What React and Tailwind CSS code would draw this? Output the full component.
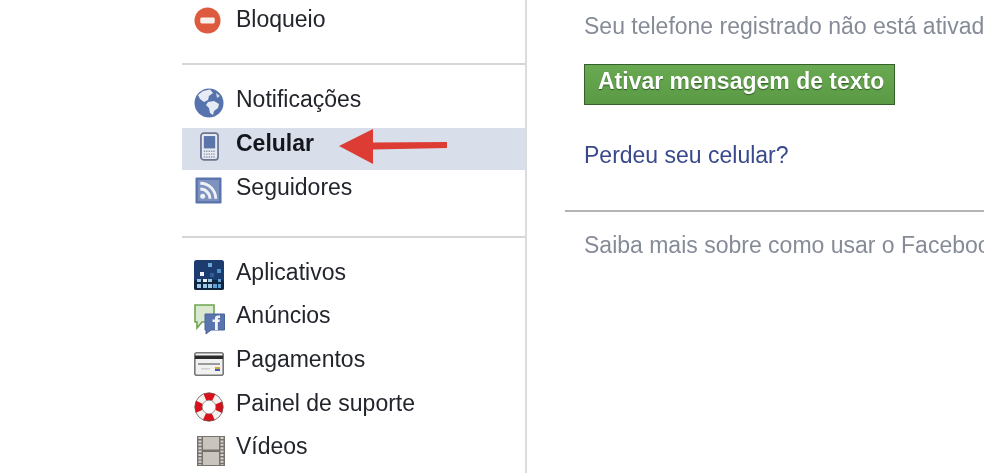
import React from "react";

const Block = () => (
  <svg viewBox="0 0 28 28" className="h-[27px] w-[27px]">
    <circle cx="14" cy="14" r="13.5" fill="#dd5a3f" />
    <rect x="6.5" y="11" width="15" height="6" rx="1.5" fill="#f7efe9" />
  </svg>
);

const Globe = () => (
  <svg viewBox="0 0 30 30" className="h-[30px] w-[30px]">
    <circle cx="15" cy="15" r="14.5" fill="#5673ad" />
    <path d="M9 3 L16 1.5 L19 5 L15 8 L14 12 L10 14 L6 11 L4 7 Z" fill="#e6ebf4" />
    <path d="M14 14 L20 13 L25 16 L24 20 L20 23 L19 27 L16 25 L15 20 L12 17 Z" fill="#e6ebf4" />
    <path d="M22 5 L26 8 L23 10 Z" fill="#d5dcea" />
  </svg>
);

const Phone = () => (
  <svg viewBox="0 0 20 30" className="h-[29px] w-[19px]">
    <rect x="1" y="1" width="18" height="28" rx="3" fill="#e8ebf3" stroke="#6a7590" strokeWidth="1.8" />
    <rect x="4" y="4" width="12" height="13" fill="#5b75ab" />
    <path d="M4 20h12M4 23h12M4 26h12" stroke="#8d97ad" strokeWidth="1.5" strokeDasharray="1.5 1" />
  </svg>
);

const Rss = () => (
  <svg viewBox="0 0 28 28" className="h-[27px] w-[27px]">
    <rect x="0.5" y="0.5" width="27" height="27" rx="1" fill="#5a74ad" />
    <rect x="3" y="3" width="22" height="22" fill="#7d92bf" />
    <circle cx="8" cy="20" r="2.6" fill="#eef1f7" />
    <path d="M5.5 12.5a10 10 0 0 1 10 10M5.5 6.5a16 16 0 0 1 16 16" fill="none" stroke="#eef1f7" strokeWidth="3" />
  </svg>
);

const Apps = () => (
  <svg viewBox="0 0 30 30" className="h-[30px] w-[30px]">
    <rect width="30" height="30" rx="2.5" fill="#1c3b6e" />
    <rect x="0" y="20" width="30" height="10" rx="2" fill="#10233f" />
    <rect x="14" y="3" width="4" height="4" fill="#6fa7d8" />
    <rect x="23" y="9" width="4" height="4" fill="#4f93cc" />
    <rect x="6" y="12" width="4" height="4" fill="#eef3f9" />
    <rect x="16" y="13" width="4" height="4" fill="#2d5f9b" />
    <g fill="#9cc8e6">
      <rect x="3" y="19" width="4" height="3" />
      <rect x="3" y="24" width="4" height="4" />
      <rect x="9" y="19" width="4" height="3" fill="#eef3f9" />
      <rect x="9" y="24" width="4" height="4" />
      <rect x="14" y="19" width="4" height="3" />
      <rect x="14" y="24" width="4" height="4" />
      <rect x="19" y="24" width="4" height="4" fill="#5fa3d6" />
      <rect x="24" y="19" width="3" height="3" fill="#5fa3d6" />
      <rect x="24" y="24" width="3" height="4" fill="#5fa3d6" />
    </g>
  </svg>
);

const Ads = () => (
  <svg viewBox="0 0 31 31" className="h-[31px] w-[31px]">
    <path d="M1 1 H20 V18 H8 L3 24 V18 H1 Z" fill="#d9e8cf" stroke="#6ea552" strokeWidth="1.6" />
    <path d="M11 10 H30.5 V26 H17 L12 30 V26 H11 Z" fill="#5a74ad" stroke="#4a639b" strokeWidth="1" />
    <path d="M21 26 V18 H18.5 V15.5 H21 V14 Q21 11.5 24 11.5 H26 V14 H24.5 Q23.8 14 23.8 15 V15.5 H26 L25.6 18 H23.8 V26 Z" fill="#f2f4f9" />
  </svg>
);

const Card = () => (
  <svg viewBox="0 0 30 24" className="h-[24px] w-[30px]">
    <rect x="0.8" y="0.8" width="28.4" height="22.4" rx="2" fill="#f1f1ef" stroke="#77777a" strokeWidth="1.6" />
    <rect x="1" y="3.5" width="28" height="3.5" fill="#2b2b2e" />
    <rect x="4" y="11" width="22" height="2" fill="#9a9a9e" />
    <rect x="7" y="16" width="9" height="1.5" fill="#d0d0d2" />
    <rect x="21" y="15" width="5" height="2" fill="#d9a53a" />
    <rect x="21" y="17" width="5" height="2" fill="#4a5aa8" />
  </svg>
);

const Buoy = () => (
  <svg viewBox="0 0 30 30" className="h-[30px] w-[30px]">
    <circle cx="15" cy="15" r="10.5" fill="none" stroke="#f4f1ef" strokeWidth="7.5" />
    <circle cx="15" cy="15" r="10.5" fill="none" stroke="#d9101a" strokeWidth="7.5" strokeDasharray="9 7.5" strokeDashoffset="4.5" />
    <circle cx="15" cy="15" r="14.2" fill="none" stroke="#6d5a5a" strokeWidth="0.8" />
    <circle cx="15" cy="15" r="6.8" fill="#fff" stroke="#8c7c7c" strokeWidth="0.8" />
  </svg>
);

const Film = () => (
  <svg viewBox="0 0 28 30" className="h-[30px] w-[28px]">
    <rect x="0" y="0" width="28" height="30" fill="#77726c" />
    <rect x="6" y="1" width="16" height="12.5" fill="#c9c4bd" />
    <rect x="6" y="16" width="16" height="13" fill="#c9c4bd" />
    <path d="M3 1V29M25 1V29" stroke="#d8d4ce" strokeWidth="3" strokeDasharray="2 1.4" />
  </svg>
);

const Row = ({ icon, label, bold, active, children, h = "h-[44px]", iconBox = "pt-[4px]" }) => (
  <div className={`relative flex ${h} ${active ? "bg-[#d8dfeb]" : ""}`}>
    <div className={`flex w-[54px] shrink-0 justify-center ${iconBox}`}>{icon}</div>
    <span className={`text-[23px] leading-[30px] ${bold ? "font-bold text-[#14161c]" : "text-[#23252c]"}`}>{label}</span>
    {children}
  </div>
);

export default function App() {
  return (
    <div
      className="flex h-[473px] w-[984px] overflow-hidden whitespace-nowrap bg-white pl-[182px] blur-[0.6px]"
      style={{ fontFamily: '"Liberation Sans", Arial, sans-serif' }}
    >
      <aside className="h-full w-[345px] shrink-0 border-r-2 border-[#dcdcdc]">
        <div className="flex h-[39px]">
          <div className="flex w-[54px] shrink-0 justify-center pt-[7px] pr-[3px]">
            <Block />
          </div>
          <span className="text-[23px] leading-[38px] text-[#23252c]">Bloqueio</span>
        </div>
        <div className="mt-[24px] border-t-2 border-[#d6d6d6] pt-[19px]">
          <Row icon={<Globe />} label="Notificações" />
          <div className="mb-[2px]">
            <Row icon={<Phone />} label="Celular" bold active h="h-[42px]">
              <svg viewBox="0 0 108 36" className="absolute top-0 left-[157px] h-[36px] w-[108px]">
                <path d="M0 18 L34 1 V14.5 L108 14 V20 L34 21.5 V36 Z" fill="#dc3c34" />
              </svg>
            </Row>
          </div>
          <Row icon={<Rss />} label="Seguidores" iconBox="pt-[5px] pr-[1px]" />
        </div>
        <div className="mt-[20px] border-t-2 border-[#d6d6d6] pt-[19px]">
          <Row icon={<Apps />} label="Aplicativos" iconBox="pt-[3px]" h="h-[43px]" />
          <Row icon={<Ads />} label="Anúncios" h="h-[44px]" iconBox="pt-[4px]" />
          <Row icon={<Card />} label="Pagamentos" iconBox="pt-[8px]" h="h-[43.5px]" />
          <Row icon={<Buoy />} label="Painel de suporte" h="h-[43.5px]" />
          <Row icon={<Film />} label="Vídeos" iconBox="pt-[5px] pl-[3px]" h="h-[42px]" />
        </div>
      </aside>
      <main className="min-w-0 flex-1 overflow-hidden pl-[38px] text-[23px]">
        <div className="pl-[19px]">
          <p className="leading-[52px] text-[#868c97]">Seu telefone registrado não está ativado</p>
          <button className="mt-[12px] flex h-[41px] w-[311px] items-start border-[1.5px] border-[#35602a] bg-gradient-to-b from-[#69a951] to-[#5a9a45] pl-[13px] text-[23px] leading-[33px] font-bold text-white [text-shadow:0_1px_1px_#2f5a22]">
            Ativar mensagem de texto
          </button>
          <p className="mt-[35px] leading-[30px] text-[#39498c]">Perdeu seu celular?</p>
        </div>
        <div className="mt-[40px] border-t-2 border-[#b4b4b4] pt-[18px] pl-[19px]">
          <p className="leading-[30px] text-[#868c97]">Saiba mais sobre como usar o Facebook</p>
        </div>
      </main>
    </div>
  );
}
